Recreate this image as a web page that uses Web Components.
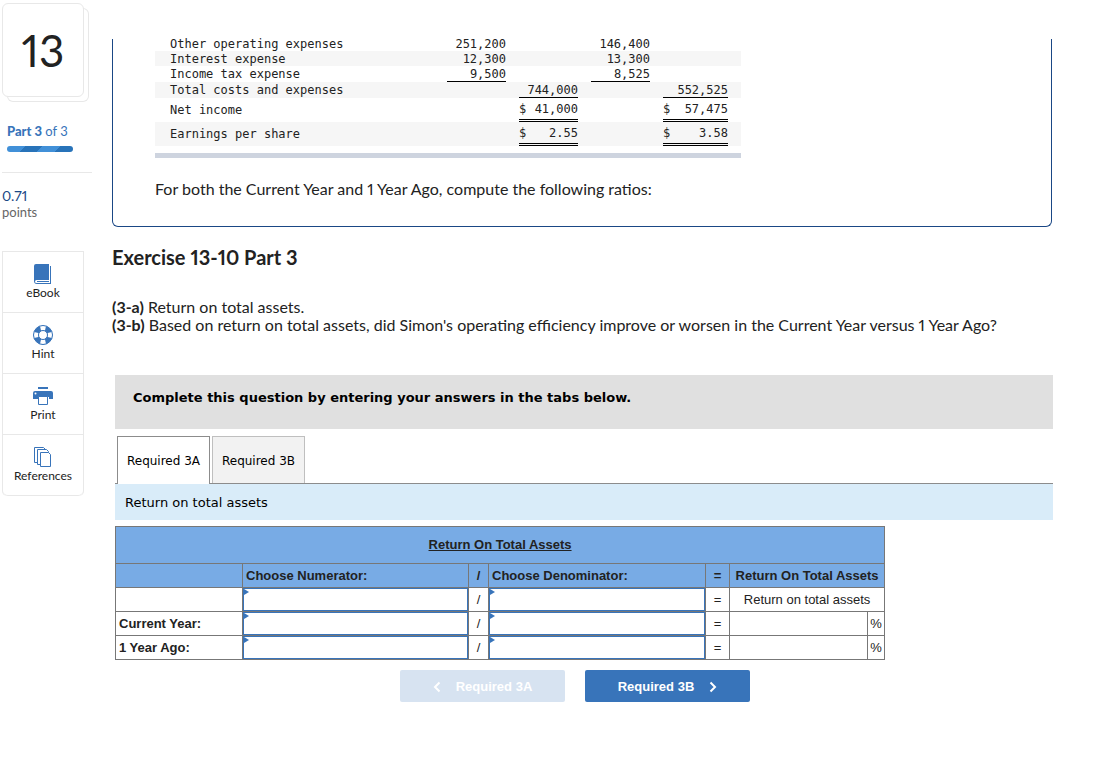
<!DOCTYPE html>
<html lang="en">
<head>
<meta charset="utf-8">
<meta name="viewport" content="width=device-width, initial-scale=1">
<title>Exercise 13-10 Part 3</title>
<style>
  body {
    margin: 0;
    background: #fff;
    color: #222;
    font: 400 16px/18px Lato, "Open Sans", sans-serif;
    font-variant-numeric: proportional-nums;
    --blue: #3874ba;
    --line: #e8e8e8;
  }
</style>
</head>
<body>
<eq-page>
  <eq-rail slot="rail" number="13" points="0.71">
    <eq-tool icon="book">eBook</eq-tool>
    <eq-tool icon="ring">Hint</eq-tool>
    <eq-tool icon="print">Print</eq-tool>
    <eq-tool icon="pages">References</eq-tool>
  </eq-rail>
  <eq-stem>
    <eq-ledger></eq-ledger>
    <p>For both the Current Year and 1 Year Ago, compute the following ratios:</p>
  </eq-stem>
  <eq-prompt>
    <span slot="title">Exercise 13-10 Part 3</span>
    <div><b>(3-a)</b> Return on total assets.</div>
    <div><b>(3-b)</b> Based on return on total assets, did Simon's operating efficiency improve or worsen in the Current Year versus 1 Year Ago?</div>
  </eq-prompt>
  <eq-tabs>
    <span slot="banner">Complete this question by entering your answers in the tabs below.</span>
    <span slot="caption">Return on total assets</span>
    <eq-ratio></eq-ratio>
    <eq-step slot="steps" dir="prev" disabled>Required 3A</eq-step>
    <eq-step slot="steps" dir="next">Required 3B</eq-step>
  </eq-tabs>
</eq-page>

<script>
// Attach an open shadow root and fill it
function shadow(el, html) {
  const root = el.attachShadow({ mode: 'open' });
  root.innerHTML = html;
  return root;
}

// Page frame: tool rail on the left, question on the right
customElements.define('eq-page', class extends HTMLElement {
  constructor() {
    super();
    shadow(this, `
      <style>
        :host { display:flex; gap:20px; padding:0 64px 0 2px; }
        main { flex:1; min-width:0; padding-top:39px; }
      </style>
      <slot name="rail"></slot>
      <main><slot></slot></main>
    `);
  }
});

// Question number, part progress, points and tools
customElements.define('eq-rail', class extends HTMLElement {
  connectedCallback() {
    if (this.shadowRoot) return;
    shadow(this, `
      <style>
        :host { display:block; flex:none; width:90px; padding-top:3px; font-size:13px; line-height:16px; }
        .num {
          display:flex; align-items:center; justify-content:center;
          box-sizing:border-box; width:82px; height:94px;
          border:1px solid var(--line); border-radius:6px; background:#fff;
          box-shadow:5px 5px 0 -1px #fff, 5px 5px 0 0 var(--line);
          font-size:44px; font-weight:400;
        }
        .part { padding:26px 5px 20px; color:var(--blue); border-bottom:1px solid var(--line); }
        .part b { font-weight:900; }
        .bar {
          width:66px; height:6px; margin-top:7px; border-radius:3px;
          background:repeating-linear-gradient(135deg, #4190d8 0 13px, #2873b9 13px 25px);
        }
        .pts { padding:15px 0 31px; color:#666; }
        .pts div { color:#1a4785; font-size:14px; }
        nav { width:82px; box-sizing:border-box; border:1px solid var(--line); border-bottom:0; border-radius:0 0 5px 5px; }
      </style>
      <div class="num">${this.getAttribute('number')}</div>
      <div class="part"><b>Part 3</b> of 3<div class="bar"></div></div>
      <div class="pts"><div>${this.getAttribute('points')}</div>points</div>
      <nav><slot></slot></nav>
    `);
  }
});

const ICONS = {
  book: '<path fill="#3874ba" d="M3 0h13v16H3.500a1.500 1.500 0 0 0 0 3H17V2h1v18H4a3 3 0 0 1-3-3V2a2 2 0 0 1 2-2z"/><path stroke="#3874ba" d="M4 17.500h12"/>',
  ring: '<circle cx="10" cy="10" r="7" fill="none" stroke="#3874ba" stroke-width="5"/><g fill="#fff"><path d="M7 1h6l-1 4.500H8zM7 19h6l-1-4.500H8zM1 7v6l4.500-1V8zM19 7v6l-4.500-1V8z"/></g><circle cx="10" cy="10" r="9.500" fill="none" stroke="#3874ba"/><circle cx="10" cy="10" r="4.500" fill="none" stroke="#3874ba"/>',
  print: '<path fill="#3874ba" d="M5 1h10v2H5zM2 5h16a2 2 0 0 1 2 2v6h-4v-2H5v2H0V7a2 2 0 0 1 2-2z"/><path fill="#fff" stroke="#3874ba" d="M5.500 10.500h9v8h-9z"/><circle cx="2.500" cy="7.500" r="1" fill="#fff"/>',
  pages: '<g fill="#fff" stroke="#3874ba"><path d="M1.500 .5h9l2 2v13h-11z"/><path d="M4.500 2.500h9l2 2v13h-11z"/><path d="M7.500 5.500h8l2 2v12h-10z"/></g>'
};

// One entry of the tool rail
customElements.define('eq-tool', class extends HTMLElement {
  connectedCallback() {
    if (this.shadowRoot) return;
    shadow(this, `
      <style>
        :host { display:block; }
        button {
          display:flex; flex-direction:column; align-items:center; gap:2px;
          box-sizing:border-box; width:100%; height:61px; padding:12px 0 0;
          border:0; border-bottom:1px solid var(--line);
          background:none; color:#222; font:400 12px/14px Lato, sans-serif; cursor:pointer;
        }
        :host(:last-child) button { border-radius:0 0 5px 5px; }
      </style>
      <button type="button">
        <svg width="20" height="20" viewBox="0 0 20 20" aria-hidden="true">${ICONS[this.getAttribute('icon')]}</svg>
        <slot></slot>
      </button>
    `);
  }
});

// Outlined frame round the question's data
customElements.define('eq-stem', class extends HTMLElement {
  constructor() {
    super();
    shadow(this, `
      <style>
        :host {
          display:flow-root; padding:0 42px 28px; margin-right:1px;
          border:1px solid #1a4785; border-top:0; border-radius:0 0 6px 6px;
        }
        ::slotted(p) { margin:22px 0 0; }
      </style>
      <slot></slot>
    `);
  }
});

// Tail of the income statement
const LEDGER = [
  ['Other operating expenses', '251,200', '', '146,400', ''],
  ['Interest expense', '12,300', '', '13,300', ''],
  ['Income tax expense', '_9,500', '', '_8,525', ''],
  ['Total costs and expenses', '', '_744,000', '', '_552,525'],
  ['Net income', '', '=$ 41,000', '', '=$ 57,475'],
  ['Earnings per share', '', '=$ 2.55', '', '=$ 3.58']
];

// A leading "_" asks for a single rule under the value, "=" for a double one
function ledgerCell(text) {
  if (!text) return '<td></td><td></td>';
  const rule = { _: 'one', '=': 'two' }[text[0]];
  if (!rule) return `<td>${text}</td><td></td>`;
  const parts = text.slice(1).split(' ').map(p => `<span>${p}</span>`).join('');
  return `<td class="${rule}"><div>${parts}</div></td><td></td>`;
}

customElements.define('eq-ledger', class extends HTMLElement {
  constructor() {
    super();
    const rows = LEDGER.map(([label, ...cells], i) =>
      `<tr class="${i > 3 ? 'tall' : i > 1 ? 'mid' : ''}"><th scope="row">${label}</th>${cells.map(ledgerCell).join('')}</tr>`);
    shadow(this, `
      <style>
        :host { display:block; width:586px; margin-top:-3px; padding-bottom:7px; border-bottom:5px solid #ced4df; }
        table { width:100%; table-layout:fixed; border-spacing:0; font:400 12px/14px "DejaVu Sans Mono", monospace; }
        th, td { padding:0; height:15px; box-sizing:border-box; text-align:right; }
        th { padding-left:15px; text-align:left; font-weight:400; }
        tr:nth-child(even) { background:#f6f6f6; }
        .mid > * { height:16px; }
        .tall > * { height:24px; }
        .one { border-bottom:1px solid #000; }
        .two { border-bottom:3px double #000; }
        div { display:flex; justify-content:space-between; }
        span:only-child { margin-left:auto; }
        .v { width:59px; } .w { width:65px; } .g { width:13px; }
      </style>
      <table>
        <colgroup><col><col class="v"><col class="g"><col class="v"><col class="g"><col class="v"><col class="g"><col class="w"><col class="g"></colgroup>
        <tbody>${rows.join('')}</tbody>
      </table>
    `);
  }
});

// Heading and the parts to answer
customElements.define('eq-prompt', class extends HTMLElement {
  constructor() {
    super();
    shadow(this, `
      <style>
        :host { display:block; padding:18px 0 41px; }
        h2 { margin:0 0 29px; font-size:20px; line-height:24px; font-weight:700; }
      </style>
      <h2><slot name="title"></slot></h2>
      <slot></slot>
    `);
  }
});

// Answer area: banner, tabs, panel and step buttons
customElements.define('eq-tabs', class extends HTMLElement {
  constructor() {
    super();
    const root = shadow(this, `
      <style>
        :host { display:block; margin-left:3px; color:#000; font:400 13px/16px "DejaVu Sans", Verdana, sans-serif; }
        .banner { padding:15px 18px 23px; background:#e0e0e0; font-weight:700; }
        .tabs { display:flex; gap:2px; padding:7px 2px 0; border-bottom:1px solid #8c8c8c; }
        button {
          box-sizing:border-box; width:93px; height:47px; padding:2px 0 0;
          border:1px solid #bfbfbf; border-bottom:0; background:#f2f2f2;
          color:#000; font:inherit; font-size:12px; white-space:nowrap; cursor:pointer;
        }
        button[aria-selected=true] { height:48px; padding-top:1px; margin-bottom:-1px; border-color:#8c8c8c; background:#fff; }
        .caption { padding:11px 10px 9px; background:#d9ecf9; }
        .panel { padding-top:6px; }
        .steps { display:flex; justify-content:center; gap:20px; padding:10px 18px 0 0; }
      </style>
      <div class="banner"><slot name="banner"></slot></div>
      <div class="tabs" role="tablist">
        <button type="button" role="tab" aria-selected="true">Required 3A</button>
        <button type="button" role="tab" aria-selected="false">Required 3B</button>
      </div>
      <div class="caption"><slot name="caption"></slot></div>
      <div class="panel" role="tabpanel"><slot></slot></div>
      <div class="steps"><slot name="steps"></slot></div>
    `);
    const tabs = root.querySelectorAll('button');
    tabs.forEach(tab => tab.addEventListener('click', () => {
      tabs.forEach(t => t.setAttribute('aria-selected', t === tab));
    }));
  }
});

// Text entry with the corner marker
customElements.define('eq-entry', class extends HTMLElement {
  connectedCallback() {
    if (this.shadowRoot) return;
    shadow(this, `
      <style>
        :host { display:block; position:relative; height:23px; }
        input {
          display:block; box-sizing:border-box; width:100%; height:100%; padding:0 8px;
          border:1px solid var(--blue); border-radius:0; background:#fff; font:inherit; outline:0;
        }
        i {
          position:absolute; left:1px; top:1px; pointer-events:none;
          border-left:5px solid var(--blue); border-top:3px solid transparent; border-bottom:3px solid transparent;
        }
      </style>
      <input type="text" aria-label="${this.getAttribute('label')}"><i></i>
    `);
  }
});

customElements.define('eq-ratio', class extends HTMLElement {
  constructor() {
    super();
    const row = (label, name, result) => `
      <tr>
        <th scope="row">${label}</th>
        <td><eq-entry label="${name} numerator"></eq-entry></td><td class="c">/</td>
        <td><eq-entry label="${name} denominator"></eq-entry></td><td class="c">=</td>
        ${result}
      </tr>`;
    shadow(this, `
      <style>
        :host { display:block; color:#222; font:400 13px/16px "Liberation Sans", Arial, sans-serif; }
        table {
          width:770px; table-layout:fixed; border-spacing:0;
          border-left:1px solid #777; border-top:1px solid #777;
        }
        th, td { box-sizing:border-box; height:24px; padding:0; border-right:1px solid #777; border-bottom:1px solid #777; }
        th { padding-left:3px; text-align:left; font-weight:700; white-space:nowrap; }
        thead th { background:#78abe5; }
        .title { height:37px; padding:0; text-align:center; text-decoration:underline; }
        .c { padding:0; text-align:center; }
      </style>
      <table>
        <colgroup>
          <col style="width:127px"><col style="width:226px"><col style="width:20px"><col style="width:217px">
          <col style="width:24px"><col style="width:138px"><col style="width:17px">
        </colgroup>
        <thead>
          <tr><th class="title" colspan="7">Return On Total Assets</th></tr>
          <tr>
            <th></th><th>Choose Numerator:</th><th class="c">/</th><th>Choose Denominator:</th>
            <th class="c">=</th><th class="c" colspan="2">Return On Total Assets</th>
          </tr>
        </thead>
        <tbody>
          ${row('', 'Formula', '<td class="c" colspan="2">Return on total assets</td>')}
          ${row('Current Year:', 'Current Year', '<td></td><td class="c">%</td>')}
          ${row('1 Year Ago:', '1 Year Ago', '<td></td><td class="c">%</td>')}
        </tbody>
      </table>
    `);
  }
});

// Previous / next button
customElements.define('eq-step', class extends HTMLElement {
  connectedCallback() {
    if (this.shadowRoot) return;
    const prev = this.getAttribute('dir') === 'prev';
    const arrow = `<svg width="8" height="12" viewBox="0 0 8 12" aria-hidden="true"><path fill="none" stroke="#fff" stroke-width="2" d="${prev ? 'M6.500 1.500 2 6l4.500 4.500' : 'M1.500 1.500 6 6l-4.500 4.500'}"/></svg>`;
    shadow(this, `
      <style>
        :host { display:block; }
        button {
          display:flex; align-items:center; justify-content:center; gap:15px;
          width:165px; height:32px; padding:1px 0 0; border:0; border-radius:2px;
          background:var(--blue); color:#fff; font:700 13px/16px "Liberation Sans", Arial, sans-serif; cursor:pointer;
        }
        button:disabled { background:#d7e3f1; cursor:default; }
      </style>
      <button type="button" ${this.hasAttribute('disabled') ? 'disabled' : ''}>${prev ? arrow : ''}<slot></slot>${prev ? '' : arrow}</button>
    `);
  }
});
</script>
</body>
</html>
